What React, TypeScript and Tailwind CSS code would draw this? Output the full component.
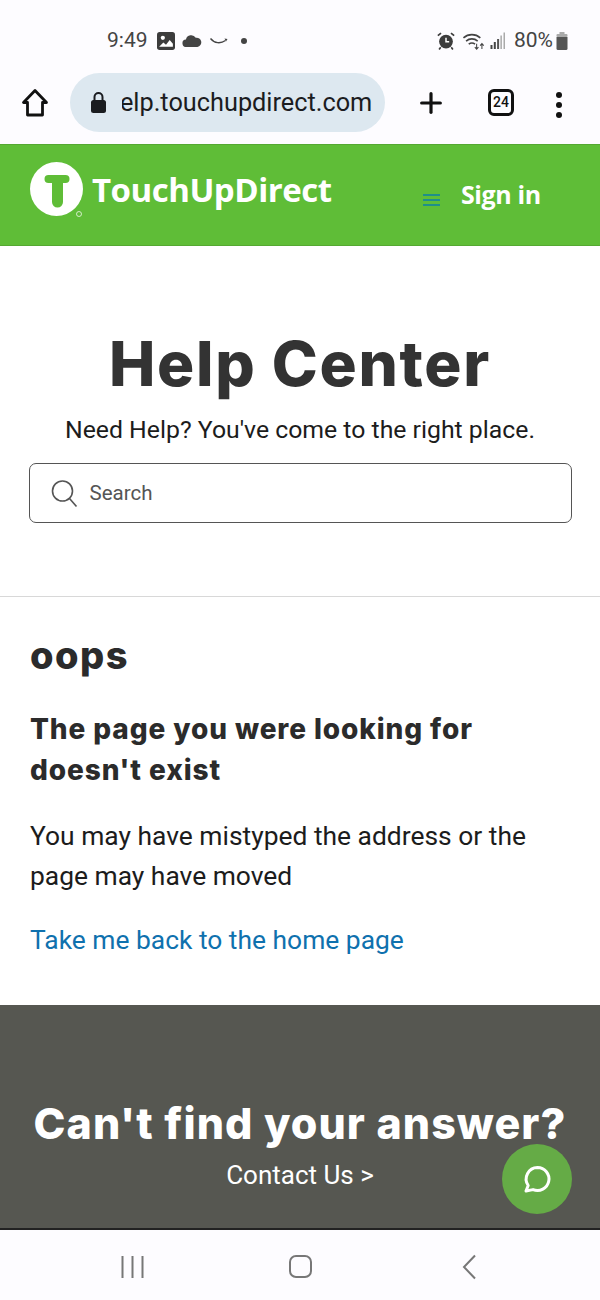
import { Plus } from "lucide-react";

const roboto = "font-['Roboto',sans-serif]";
const heading = "font-['Inter',sans-serif]";

function StatusBar() {
  return (
    <div className={`h-[72px] bg-[#fdfcff] flex items-start justify-between pl-[107px] pr-[32px] pt-[28px] text-[#444] ${roboto}`}>
      <div className="flex items-center h-[25px]">
        <span className="text-[21px] leading-[25px] w-[42px]">9:49</span>
        <svg width="18" height="18" viewBox="0 0 17 17" className="ml-[8px]">
          <rect x="0" y="0" width="17" height="17" rx="2.500" fill="#3c3c3c" />
          <circle cx="5.500" cy="5.500" r="2" fill="#fff" />
          <path d="M2 14l4-4 2.500 2 3.500-4.500 3 3.500v3z" fill="#fff" />
        </svg>
        <svg width="20" height="13" viewBox="0 0 18 12" className="ml-[7px]">
          <path d="M4 12a3.500 3.500 0 0 1-.6-7A5 5 0 0 1 12.500 3.500 4.300 4.300 0 0 1 14 12z" fill="#444" />
        </svg>
        <svg width="20" height="8" viewBox="0 0 19 8" className="ml-[7px]">
          <path d="M1 1.500c4 5 10 5.500 15 2" fill="none" stroke="#444" strokeWidth="1.300" />
          <path d="M15 1.500l3 .5-1.500 2.500z" fill="#444" />
        </svg>
        <div className="ml-[12px] size-[6px] rounded-full bg-[#444]" />
      </div>
      <div className="flex items-center h-[25px]">
        <svg width="18" height="18" viewBox="0 0 17 17">
          <circle cx="8.500" cy="9" r="6.500" fill="#3c3c3c" />
          <path d="M8.500 5.500v3.800h3" fill="none" stroke="#fff" strokeWidth="1.400" />
          <path d="M.8 3.500l3-2.500M16.200 3.500l-3-2.500M3.500 14.500l-1.500 2M13.500 14.500l1.500 2" stroke="#3c3c3c" strokeWidth="1.600" />
        </svg>
        <svg width="24" height="19" viewBox="0 0 22 18" className="ml-[7px]">
          <path d="M1 6.500a12 12 0 0 1 16 0M3.500 9.500a8.500 8.500 0 0 1 11 0M6 12.500a5 5 0 0 1 6 0" fill="none" stroke="#444" strokeWidth="1.500" />
          <path d="M13.500 12v5M11.800 15.300l1.700 1.900 1.700-1.900M18.500 17v-5M16.800 13.800l1.700-1.900 1.700 1.900" fill="none" stroke="#444" strokeWidth="1" />
        </svg>
        <svg width="16" height="17" viewBox="0 0 15 17" className="ml-[4px]">
          <rect x="0" y="13" width="2" height="4" fill="#444" />
          <rect x="3.300" y="10" width="2" height="7" fill="#444" />
          <rect x="6.600" y="7" width="2" height="10" fill="#555" />
          <rect x="9.900" y="3.500" width="1.500" height="13.500" fill="#aaa" />
          <rect x="13" y="0.500" width="1.500" height="16.500" fill="#aaa" />
        </svg>
        <span className="ml-[8px] text-[21px] leading-[25px]">80%</span>
        <svg width="12" height="18" viewBox="0 0 12 18" className="ml-[3px]">
          <rect x="3.500" y="0" width="5" height="2" fill="#aaa" />
          <rect x="0.500" y="2" width="11" height="3" rx="1" fill="#aaa" />
          <path d="M.5 5h11v11.500a1.500 1.500 0 0 1-1.500 1.500H2a1.500 1.500 0 0 1-1.500-1.500z" fill="#555" />
        </svg>
      </div>
    </div>
  );
}

function BrowserBar() {
  return (
    <div className="h-[72px] bg-[#fdfcff] flex items-start pt-[1px] relative">
      <svg width="28" height="30" viewBox="0 0 28 30" className="ml-[21px] mt-[15px] shrink-0">
        <path d="M14 2.500L2.500 14.500h4v12.500h15V14.500h4z" fill="none" stroke="#111" strokeWidth="2.800" strokeLinejoin="round" />
      </svg>
      <div className="ml-[21px] w-[315px] h-[59px] rounded-full bg-[#dde8f0] flex items-center shrink-0 overflow-hidden">
        <svg width="17" height="23" viewBox="0 0 17 23" className="ml-[20px] shrink-0">
          <path d="M4.500 10V6a4 4 0 0 1 8 0v4" fill="none" stroke="#1a1c20" strokeWidth="2" />
          <rect x="1" y="9" width="15" height="13" rx="2.500" fill="#1a1c20" />
        </svg>
        {/* the address is scrolled, so the first letters are clipped as in the browser */}
        <div className={`ml-[15px] w-[251px] overflow-hidden whitespace-nowrap text-[25.300px] leading-[30px] text-[#1b1c1f] ${roboto}`}>
          <span className="inline-block ml-[-16px]">help.touchupdirect.com</span>
        </div>
      </div>
      <Plus size={32} strokeWidth={2.400} color="#111" className="ml-[30px] mt-[14px] shrink-0" />
      <div className={`ml-[41px] mt-[16px] w-[26px] h-[27px] border-[3px] border-[#111] rounded-[6px] flex items-center justify-center text-[14px] font-medium text-[#111] ${roboto}`}>
        24
      </div>
      <div className="ml-[42px] mt-[19px] flex flex-col gap-[4px]">
        <div className="size-[6px] rounded-full bg-[#111]" />
        <div className="size-[6px] rounded-full bg-[#111]" />
        <div className="size-[6px] rounded-full bg-[#111]" />
      </div>
    </div>
  );
}

function SiteHeader() {
  return (
    <header className="h-[102px] bg-[#5fbd37] border-y border-[#55a832] flex items-start pl-[29px]">
      <svg width="54" height="60" viewBox="0 0 54 60" className="mt-[17px] shrink-0">
        <ellipse cx="27.500" cy="27" rx="26.500" ry="27" fill="#fff" />
        <path d="M19.500 13h17a4 4 0 0 1 0 8H34v19a5.500 5.500 0 0 1-11 0V21h-3.500a4 4 0 0 1 0-8z" fill="#5fbd37" />
        <circle cx="50" cy="52" r="2.500" fill="none" stroke="#fff" strokeWidth="0.700" />
      </svg>
      <span className="ml-[9px] mt-[25px] w-[239px] text-[33px] leading-[40px] font-bold text-white tracking-[-0.500px] whitespace-nowrap font-['Open_Sans',sans-serif]">
        TouchUpDirect
      </span>
      <div className="ml-[92px] mt-[49px] w-[17px] flex flex-col gap-[3px]">
        <div className="h-[2px] bg-[#1f8f8a]" />
        <div className="h-[2px] bg-[#1f8f8a]" />
        <div className="h-[2px] bg-[#1f8f8a]" />
      </div>
      <span className="ml-[21px] mt-[32px] text-[25px] leading-[34px] font-bold text-white tracking-[-0.400px] whitespace-nowrap font-['Open_Sans',sans-serif]">
        Sign in
      </span>
    </header>
  );
}

export default function App() {
  return (
    <div className="relative w-[600px] h-[1300px] overflow-hidden bg-white">
      <StatusBar />
      <BrowserBar />
      <SiteHeader />

      <section className="h-[351px] border-b border-[#d8d8d8] flex flex-col items-center">
        <h1 className={`mt-[82px] text-[62px] leading-[72px] font-extrabold text-[#333] tracking-[1.700px] whitespace-nowrap ${heading}`}>Help Center</h1>
        <p className={`mt-[15px] text-[24.800px] leading-[30px] text-[#1c1c1c] ${roboto}`}>Need Help? You've come to the right place.</p>
        <div className="mt-[18px] w-[543px] h-[60px] border border-[#555] rounded-[7px] flex items-center pl-[21px]">
          <svg width="27" height="29" viewBox="0 0 27 29">
            <circle cx="11.500" cy="12" r="10" fill="none" stroke="#555" strokeWidth="1.600" />
            <path d="M18.500 19.500l7 8" stroke="#555" strokeWidth="1.600" />
          </svg>
          <span className={`ml-[12px] text-[20.500px] text-[#555] ${roboto}`}>Search</span>
        </div>
      </section>

      <main className="h-[408px] px-[30px] pt-[36px]">
        <h2 className={`text-[38px] leading-[44px] font-extrabold text-[#2b2b2b] tracking-[1.500px] ${heading}`}>oops</h2>
        <h3 className={`mt-[32px] text-[28px] leading-[41px] font-extrabold text-[#2b2b2b] tracking-[0.900px] whitespace-nowrap ${heading}`}>
          The page you were looking for<br />doesn't exist
        </h3>
        <p className={`mt-[25px] text-[26.400px] leading-[40px] text-[#1c1c1c] whitespace-nowrap ${roboto}`}>
          You may have mistyped the address or the<br />page may have moved
        </p>
        <a className={`block mt-[24px] text-[26.400px] leading-[40px] text-[#0f71ae] ${roboto}`}>Take me back to the home page</a>
      </main>

      <section className="h-[225px] bg-[#565751] border-b-2 border-[#222] flex flex-col items-center">
        <h2 className={`mt-[92px] text-[43px] leading-[52px] font-extrabold text-white tracking-[1.050px] whitespace-nowrap ${heading}`}>Can't find your answer?</h2>
        <a className={`mt-[11px] text-[26px] leading-[30px] text-white ${roboto}`}>Contact Us &gt;</a>
      </section>

      <nav className="h-[70px] bg-[#fdfcff] flex items-start pt-[25px]">
        <svg width="24" height="24" viewBox="0 0 24 24" className="ml-[121px]">
          <path d="M1.500 1v22M11.500 1v22M21.500 1v22" stroke="#777" strokeWidth="2" />
        </svg>
        <div className="ml-[144px] w-[23px] h-[23px] border-2 border-[#777] rounded-[7px]" />
        <svg width="16" height="26" viewBox="0 0 16 26" className="ml-[149px] -mt-[1px]">
          <path d="M14 1.500L3 13l11 11.500" fill="none" stroke="#777" strokeWidth="2" />
        </svg>
      </nav>

      {/* chat bubble floats over the footer */}
      <button className="absolute left-[502px] top-[1144px] w-[70px] h-[70px] rounded-full bg-[#65ab46] flex items-center justify-center">
        <svg width="30" height="30" viewBox="0 0 30 30">
          <path d="M15.500 3.500a11.500 11.500 0 1 1-4.500 22.100L4 27l2.200-5.500A11.500 11.500 0 0 1 15.500 3.500z" fill="none" stroke="#fff" strokeWidth="3" strokeLinejoin="round" />
        </svg>
      </button>
    </div>
  );
}
